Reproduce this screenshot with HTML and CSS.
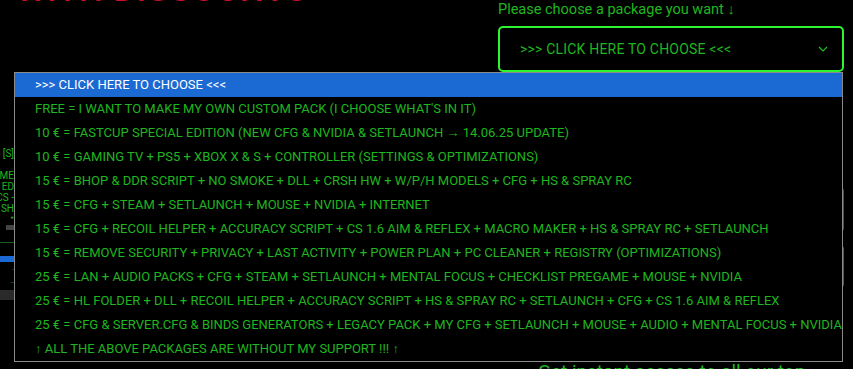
FILE: index.html
```html
<!DOCTYPE html>
<html lang="en">

<head>
   <meta charset="UTF-8" />
   <meta name="viewport" content="width=device-width, initial-scale=1" />
   <title>Packages</title>
   <link rel="stylesheet" href="styles.css">
</head>

<body>
   <div class="page">
      <div class="left">
         <h1 class="title">WITH DISCOUNTS</h1>
         <div class="side-strip">
            <div class="strip-line">[S]</div>
            <div class="strip-gap"></div>
            <div class="strip-line">WELCOME</div>
            <div class="strip-line">ED</div>
            <div class="strip-line">- CS</div>
            <div class="strip-line">SH</div>
            <div class="strip-line small">*</div>
            <div class="strip-btn"></div>
            <div class="strip-rule"></div>
            <div class="strip-blue"></div>
            <div class="strip-line tiny">-</div>
            <div class="strip-line tiny">--</div>
            <div class="strip-grey"></div>
         </div>
      </div>

      <div class="right">
         <label class="choose-label" for="pkg">Please choose a package you want ↓</label>
         <div class="select-box" id="pkg">
            <span>&gt;&gt;&gt; CLICK HERE TO CHOOSE &lt;&lt;&lt;</span>
            <svg class="chevron" width="10" height="6" viewBox="0 0 10 6">
               <path d="M1 1l4 4 4-4" fill="none" stroke="#20c020" stroke-width="1.2" />
            </svg>
         </div>
         <div class="card card-red"></div>
         <div class="card card-blue"></div>
         <div class="promo">Get instant access to all our top-rated packs</div>
      </div>

      <!-- open dropdown of the select, drawn over the page -->
      <ul class="options">
         <li class="selected">&gt;&gt;&gt; CLICK HERE TO CHOOSE &lt;&lt;&lt;</li>
         <li>FREE = I WANT TO MAKE MY OWN CUSTOM PACK (I CHOOSE WHAT'S IN IT)</li>
         <li>10 € = FASTCUP SPECIAL EDITION (NEW CFG &amp; NVIDIA &amp; SETLAUNCH → 14.06.25 UPDATE)</li>
         <li>10 € = GAMING TV + PS5 + XBOX X &amp; S + CONTROLLER (SETTINGS &amp; OPTIMIZATIONS)</li>
         <li>15 € = BHOP &amp; DDR SCRIPT + NO SMOKE + DLL + CRSH HW + W/P/H MODELS + CFG + HS &amp; SPRAY RC</li>
         <li>15 € = CFG + STEAM + SETLAUNCH + MOUSE + NVIDIA + INTERNET</li>
         <li>15 € = CFG + RECOIL HELPER + ACCURACY SCRIPT + CS 1.6 AIM &amp; REFLEX + MACRO MAKER + HS &amp; SPRAY RC + SETLAUNCH</li>
         <li>15 € = REMOVE SECURITY + PRIVACY + LAST ACTIVITY + POWER PLAN + PC CLEANER + REGISTRY (OPTIMIZATIONS)</li>
         <li>25 € = LAN + AUDIO PACKS + CFG + STEAM + SETLAUNCH + MENTAL FOCUS + CHECKLIST PREGAME + MOUSE + NVIDIA</li>
         <li>25 € = HL FOLDER + DLL + RECOIL HELPER + ACCURACY SCRIPT + HS &amp; SPRAY RC + SETLAUNCH + CFG + CS 1.6 AIM &amp; REFLEX</li>
         <li>25 € = CFG &amp; SERVER.CFG &amp; BINDS GENERATORS + LEGACY PACK + MY CFG + SETLAUNCH + MOUSE + AUDIO + MENTAL FOCUS + NVIDIA</li>
         <li>↑ ALL THE ABOVE PACKAGES ARE WITHOUT MY SUPPORT !!! ↑</li>
      </ul>
   </div>
</body>

</html>
```

FILE: styles.css
```css
:root {
   --bg: #000000;
   --green: #1fb61f;
   --lime: #2ef52e;
   --red: #c8102e;
   --blue: #1b69d3;
   --grey: #8a8a8a;
}

* {
   box-sizing: border-box;
   margin: 0;
   padding: 0;
}

html,
body {
   background: var(--bg);
   height: 100%;
   overflow: hidden;
}

body {
   font-family: Roboto, 'Liberation Sans', sans-serif;
   color: var(--green);
}

.page {
   position: relative;
   display: grid;
   grid-template-columns: 498px 346px;
   height: 369px;
}

.left {
   overflow: hidden;
}

.title {
   height: 0;
   margin-top: -31px;
   padding-left: 16px;
   font-size: 34px;
   line-height: 40px;
   font-weight: 500;
   letter-spacing: 1px;
   color: var(--red);
   white-space: nowrap;
}

.side-strip {
   width: 14px;
   margin-top: 179px;
   overflow: hidden;
   direction: rtl;
}

.strip-line {
   font-size: 10px;
   line-height: 11px;
   white-space: nowrap;
   text-align: right;
}

.strip-gap {
   height: 11px;
}

.strip-line.small {
   font-size: 8px;
   line-height: 9px;
}

.strip-line.tiny {
   font-size: 6px;
   line-height: 13px;
}

.strip-btn {
   width: 8px;
   height: 5px;
   margin: 2px 0 0 6px;
   background: #444;
}

.strip-rule {
   height: 1px;
   margin-top: 12px;
   background: #1b5e1b;
}

.strip-blue {
   height: 6px;
   margin-top: 13px;
   background: var(--blue);
}

.strip-grey {
   height: 10px;
   margin-top: 2px;
   background: #2a2a2a;
}

.right {
   display: flex;
   flex-direction: column;
}

.choose-label {
   margin-top: 2px;
   font-size: 14.5px;
   line-height: 16px;
}

.select-box {
   display: flex;
   align-items: center;
   justify-content: space-between;
   height: 46px;
   margin-top: 8px;
   padding: 0 14px 0 20px;
   border: 2px solid var(--lime);
   border-radius: 5px;
   font-size: 14px;
   letter-spacing: 0.2px;
}

.card {
   margin-left: 40px;
   border-radius: 3px;
}

.card-red {
   height: 43px;
   margin-top: 116px;
   border-right: 2px solid #e01010;
}

.card-blue {
   height: 41px;
   margin-top: 15px;
   border-right: 2px solid #4a45d8;
}

.promo {
   margin-top: 74px;
   padding-left: 40px;
   font-size: 19px;
   line-height: 22px;
}

.options {
   position: absolute;
   left: 14px;
   top: 72px;
   width: 829px;
   list-style: none;
   background: var(--bg);
   border: 1px solid var(--grey);
}

.options li {
   height: 24px;
   line-height: 24px;
   padding-left: 20px;
   font-size: 13px;
   white-space: nowrap;
   overflow: hidden;
}

.options li.selected {
   background: var(--blue);
   color: #ffffff;
}
```
